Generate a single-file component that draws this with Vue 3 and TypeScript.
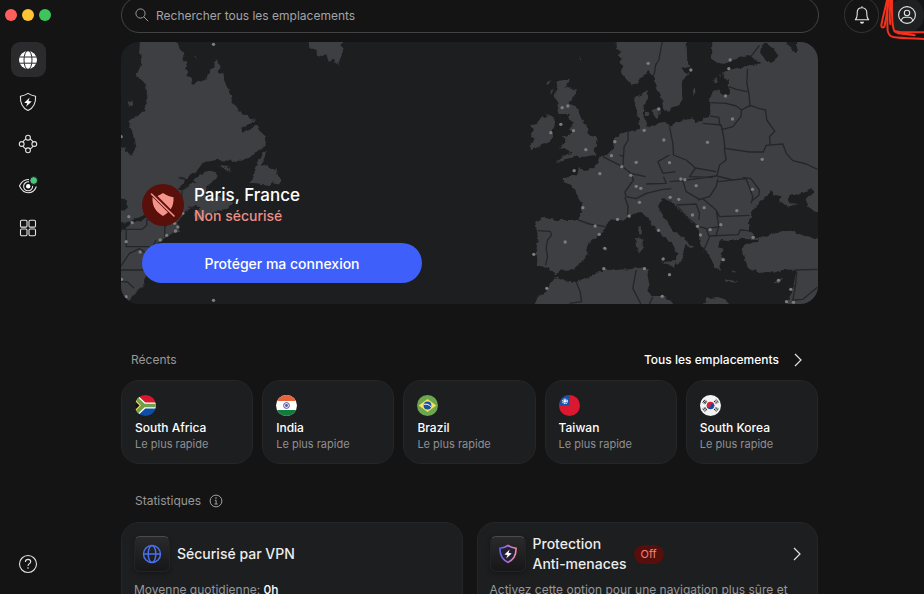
<script setup lang="ts">
interface Place {
  name: string
  flag: 'za' | 'in' | 'br' | 'tw' | 'kr'
}

const places: Place[] = [
  { name: 'South Africa', flag: 'za' },
  { name: 'India', flag: 'in' },
  { name: 'Brazil', flag: 'br' },
  { name: 'Taiwan', flag: 'tw' },
  { name: 'South Korea', flag: 'kr' },
]

type Point = [number, number]

const americaServers: Point[] = [
  [282, 13], [38, 548], [20, 605], [190, 520], [165, 550], [175, 561], [168, 573],
  [142, 586], [122, 600], [28, 530], [62, 636], [6, 718], [20, 770], [282, 781], [5, 290],
]

const europeServers: Point[] = [
  [386, 70], [418, 207], [374, 271], [433, 300], [286, 305], [276, 347], [307, 380], [334, 406],
  [350, 367], [241, 401], [164, 392], [128, 203], [145, 198], [124, 253], [162, 272], [94, 278],
  [199, 329], [514, 90], [632, 60], [628, 86], [618, 168], [639, 237], [564, 307], [728, 358],
  [450, 368], [484, 417], [496, 419], [530, 437], [699, 448], [452, 472], [478, 478], [554, 503],
  [652, 512], [519, 525], [604, 554], [534, 559], [572, 569], [543, 585], [701, 592], [611, 659],
  [450, 704], [777, 721], [814, 748], [801, 785], [822, 787], [190, 503], [227, 558], [239, 583],
  [294, 538], [329, 528], [350, 439], [364, 445], [360, 487], [417, 571], [137, 606], [43, 643],
  [82, 745], [253, 686], [375, 686], [428, 769], [431, 657], [256, 625],
]
</script>

<template>
  <div class="app">
    <aside class="sidebar">
      <div class="lights">
        <button class="light red" aria-label="Fermer"></button>
        <button class="light yellow" aria-label="Réduire"></button>
        <button class="light green" aria-label="Agrandir"></button>
      </div>
      <nav class="nav">
        <button class="nav-item active" aria-label="VPN">
          <svg viewBox="0 0 20 20" width="20" height="20">
            <circle cx="10" cy="10" r="9" fill="#fff" />
            <g fill="none" stroke="#2b2b2e" stroke-width="1">
              <ellipse cx="10" cy="10" rx="4" ry="9.4" />
              <path d="M1 7h18M1 13.2h18" />
            </g>
          </svg>
        </button>
        <button class="nav-item" aria-label="Protection Anti-menaces">
          <svg viewBox="0 0 20 20" width="20" height="20">
            <path class="line" d="M10 1.4c2.3 1.6 4.6 2.4 7.6 2.8.3 6.200-1.600 11.500-7.600 14.300C4 15.700 2.100 10.400 2.400 4.200 5.400 3.800 7.700 3 10 1.400z" />
            <path d="M11.700 5.400 6.300 10.700l3 .6-1.300 3.400 5.700-5.200-3.200-.6z" fill="#fff" />
          </svg>
        </button>
        <button class="nav-item" aria-label="Réseau Mesh">
          <svg viewBox="0 0 20 20" width="20" height="20">
            <g class="line">
              <circle cx="10" cy="3.700" r="2.400" />
              <circle cx="10" cy="16.300" r="2.400" />
              <circle cx="3.700" cy="10" r="2.400" />
              <circle cx="16.300" cy="10" r="2.400" />
              <path d="M7.900 4.900Q5.900 6 4.900 7.900M12.100 4.900Q14.100 6 15.100 7.900M4.900 12.100Q5.900 14 7.900 15.100M15.100 12.100Q14.100 14 12.100 15.100" />
            </g>
          </svg>
        </button>
        <button class="nav-item" aria-label="Surveillance du dark web">
          <svg viewBox="0 0 20 20" width="20" height="20">
            <g class="line">
              <path d="M11 3.600C6.600 3.200 3.500 5.700 1.500 10c1.900 4 5 6.700 8.700 6.700 3.600 0 6.700-2.300 8.200-6.200" />
              <path d="M11 5.900a4.500 4.500 0 1 0 3.600 4" />
            </g>
            <circle cx="10.200" cy="10.300" r="2.200" fill="#fff" />
            <circle cx="15.700" cy="4.500" r="3.900" fill="#4bc480" stroke="#141415" stroke-width="1" />
          </svg>
        </button>
        <button class="nav-item" aria-label="Tous les produits">
          <svg viewBox="0 0 20 20" width="20" height="20">
            <g class="line">
              <rect x="2.500" y="2.300" width="6.500" height="6.800" rx="1.200" />
              <rect x="11" y="2.300" width="6.500" height="6.800" rx="1.200" />
              <rect x="2.500" y="11" width="6.500" height="6.800" rx="1.200" />
              <rect x="11" y="11" width="6.500" height="6.800" rx="1.200" />
            </g>
          </svg>
        </button>
      </nav>
      <button class="nav-item help" aria-label="Aide">
        <svg viewBox="0 0 20 20" width="20" height="20">
          <g class="line">
            <circle cx="10" cy="10" r="8.500" />
            <path d="M7.400 8c0-1.600 1.100-2.600 2.700-2.600 1.500 0 2.600.9 2.600 2.300 0 1.900-2.700 2-2.700 4.200" />
          </g>
          <circle cx="10" cy="14" r=".8" fill="#ddd" />
        </svg>
      </button>
    </aside>

    <div class="page">
      <header class="topbar">
        <label class="search">
          <svg viewBox="0 0 14 14" width="14" height="14">
            <circle cx="5.500" cy="5.500" r="4.600" />
            <path d="M8.900 8.900 13.200 13.200" />
          </svg>
          <input type="search" placeholder="Rechercher tous les emplacements" aria-label="Rechercher tous les emplacements" />
        </label>
        <div class="actions">
          <button class="round" aria-label="Notifications">
            <svg viewBox="0 0 20 20" width="20" height="20">
              <path class="line" d="M3.300 14.800h13.400c-1.300-1.500-1.900-2.500-1.900-5.300V7.600c0-2.800-2-4.800-4.800-4.800S5.200 4.800 5.200 7.600v1.900c0 2.800-.6 3.800-1.900 5.300zM10 2.800V1.300" />
              <path d="M8 16.700h4a2 2 0 0 1-4 0z" fill="#e6e6e6" />
            </svg>
          </button>
          <button class="round account" aria-label="Compte">
            <svg viewBox="0 0 20 20" width="20" height="20">
              <g class="line">
                <circle cx="10" cy="10" r="8.400" />
                <circle cx="10" cy="8" r="2.700" />
                <path d="M4.400 16c.3-2.700 2-3.700 3.900-3.700h3.400c1.900 0 3.600 1 3.900 3.700" />
              </g>
            </svg>
          </button>
          <svg class="scribble" viewBox="0 0 132 120" width="44" height="40" aria-hidden="true">
            <path d="M22 -4C16 25 5 65 4 77Q6 86 13 80C18 62 22 25 28 -4" />
            <path d="M23 -4C22 30 21 65 23 92Q26 108 39 111C65 115 95 115 136 117" />
            <path d="M36 -4C36 30 34 65 41 87C43 100 52 98 70 97L136 97" />
            <path d="M30 -4C33 20 26 45 31 72M45 93Q70 99 104 106L54 100" />
          </svg>
        </div>
      </header>

      <main class="content">
        <section class="hero">
          <svg class="map" viewBox="0 0 2094 786" preserveAspectRatio="xMidYMid slice" aria-hidden="true">
            <defs>
              <filter id="coast" x="0" y="0" width="100%" height="100%" color-interpolation-filters="sRGB">
                <feTurbulence type="fractalNoise" baseFrequency="0.060" numOctaves="2" seed="4" />
                <feDisplacementMap in="SourceGraphic" scale="14" xChannelSelector="R" yChannelSelector="G" />
              </filter>
            </defs>
            <g filter="url(#coast)">
              <rect class="sea" x="-20" y="-20" width="2140" height="830" />
              <g transform="translate(-3 -6)">
                <path class="land" d="M65 -10H163L178 24 195 42 192 60 204 66 196 82 208 98 200 108 216 112 220 136 234 122 244 128 262 115 270 92 280 88 290 58 300 75 298 95 314 102 310 120 326 140 328 160 338 168 336 188 350 198 365 222 385 226 390 236 410 240 388 252 366 264 368 278 388 270 412 256 418 270 440 290 438 318 418 330 400 345 370 362 330 362 290 360 250 368 238 385 212 404 178 445 192 450 230 414 262 394 290 400 291 412 262 442 258 462 272 478 300 470 342 488 325 506 296 510 268 526 235 544 222 528 242 504 226 498 200 512 190 522 172 545 180 575 160 580 140 590 120 605 106 620 86 640 98 655 82 670 80 700 70 740 40 765 20 800H-10V330L18 322 20 336 38 344 48 322 38 272 30 240 55 228 76 208 84 180 80 140 64 118 48 112 58 90 66 70 62 40z" />
                <path class="land" d="M392 428 428 338 440 330 436 350 424 378 444 372 452 386 472 388 470 402 486 418 476 434 462 424 454 436 410 430z" />
                <path class="land" d="M298 374 322 378 336 392 318 390zM558 -10H672L668 40 655 72 640 58 628 62 618 42 600 50 588 30 570 24z" />
                <path class="land" d="M25 190l12 -8 4 10 -10 6zM224 52l8 0 0 8z" />
                <path class="sea" d="M-10 470 18 480 28 500 14 512 -10 508zM0 552 40 540 50 534 78 526 80 536 52 544 34 550 28 560 0 578zM178 412l50 14-6 6-40-14z" />
              </g>
              <g transform="translate(1197 -6)">
                <path class="land" d="M118 122 150 116 148 126 136 144 172 148 168 162 152 184 146 194 168 200 178 212 184 235 200 252 208 285 234 294 232 316 220 330 228 344 200 350 170 350 140 358 112 370 130 345 160 338 140 328 118 324 140 308 130 290 155 278 150 262 165 250 148 238 152 222 118 222 112 200 116 182 104 174 110 145z" />
                <path class="land" d="M64 230 74 234 88 222 104 230 106 255 100 270 100 298 92 305 60 318 40 330 28 320 46 296 34 290 42 272 32 256 55 252zM82 126l14-6-8 18zM90 150l12 2-8 10zM180 50l5 8-4 4z" />
                <path class="land" d="M290 -10 292 26 306 36 295 46 308 58 296 66 312 78 304 96 318 115 335 134 352 128 372 110 386 90 394 100 402 105 412 140 428 180 432 215 450 218 454 205 480 195 490 165 486 128 494 116 508 100 485 86 512 80 502 50 502 -10z" />
                <path class="land" d="M376 214 390 218 388 230 376 226zM400 210 418 202 421 222 412 238 402 224zM520 150l6-6 2 16-6 8zM584 120l12-3-2 12-8 1zM594 104l10 0-2 8z" />
                <path class="land" d="M362 266 358 235 346 205 348 172 366 166 385 148 386 172 374 195 370 222 380 238 378 258 395 262 412 250 440 245 450 260 470 245 520 235 532 248 548 246 552 232 572 228 572 170 585 150 600 152 610 165 628 164 628 125 615 112 610 95 650 85 695 76 725 70 718 62 704 62 698 46 660 54 630 62 610 72 590 66 578 58V-10H910V810H788L802 792 822 740 830 690 794 688 770 696 740 692 720 700 704 690 684 682 676 655 668 640 672 616 688 608 716 606 718 596 690 598 660 596 630 604 600 600 596 620 612 630 606 642 618 660 602 664 604 692 586 684 580 672 568 645 556 630 540 606 538 570 520 545 490 520 470 498 456 484 436 474 420 490 416 500 430 525 448 554 460 570 500 602 522 622 512 624 500 612 490 628 496 645 476 675 464 668 476 644 456 608 440 596 418 576 400 555 384 532 368 516 350 518 330 530 310 542 290 538 262 545 260 562 240 584 215 604 202 620 204 640 190 660 174 680 158 688 120 692 106 706 86 680 52 678 54 650 48 640 56 600 48 548 68 532 110 540 175 540 184 515 189 490 170 460 165 442 134 430 126 412 172 406 178 385 205 392 232 372 240 350 262 345 284 322 280 302 300 282 325 275z" />
                <path class="land" d="M36 810 50 775 80 755 98 728 106 710 126 720 170 726 215 706 255 690 330 688 375 682 390 690 384 710 392 735 380 750 400 768 430 768 450 778 475 810zM545 810 562 775 595 771 620 780 650 810z" />
                <path class="land" d="M356 558 367 554 367 582 360 584zM350 598 368 594 371 630 355 640zM425 664 466 660 464 684zM248 624 258 620 260 629zM614 718 655 724 650 728 616 724zM762 728 788 716 776 734zM640 690l10 6-8 2z" />
                <path class="sea" d="M724 480 748 462 754 450 762 464 786 468 782 484 804 500 838 492 810 490 808 468 850 460 880 444 884 452 856 482 866 500 910 530V598L850 586 815 572 770 576 730 592 704 590 686 572 690 545 700 510z" />
                <path class="sea" d="M724 20 738 10 762 26 774 44 762 66 740 62 722 42zM800 -10H834L832 34 824 40 814 20 802 14z" />
              </g>
            </g>
            <g transform="translate(-3 -6)">
              <path class="border" d="M3 568H68L82 556V540L120 530 140 560M20 568V620H100L110 600M136 540V590M3 690H84M3 680 30 640 60 626 86 644M3 724 24 726 44 745M186 490 188 450 210 436M206 500 240 510" />
              <circle v-for="(p, i) in americaServers" :key="i" class="server" :cx="p[0]" :cy="p[1]" r="5" />
            </g>
            <g transform="translate(1197 -6)">
              <path class="border" d="M428 6 418 60 408 76 404 105M694 50 720 16M684 86 682 130 688 160 692 200M628 140 650 148 684 155M574 188 620 190 650 198 666 210 692 196 720 206 738 210 742 240 766 274 750 290 752 314M666 210 664 230 640 260 610 268 600 250M550 250 605 255 614 300 616 325 690 336 732 336 740 316 790 312 800 340 820 362 860 372 894 388M572 228 598 232 600 250M614 325 620 360 600 375 592 408 640 420 674 416M450 260 460 310 462 345 500 360 528 384 590 395M528 384 510 410 580 412M415 365 450 345M415 365 430 400 468 395M325 275 326 300 314 320 312 350 310 380 334 400 342 420 316 456M250 350 290 370 312 382M312 350 300 345M334 400 378 410M316 456 320 470 350 476 380 460 430 448 455 446M380 432 440 430 432 410M316 472 326 500 324 524 334 530M176 540 210 552 258 560M55 572 92 574 96 586 84 600 80 625 84 650 78 676M450 425 490 422 500 455 540 478 570 470 590 440 595 416M490 422 590 408M595 425 680 416 700 470 695 490M670 412 694 416 720 450 718 466 698 482M470 495 530 492 540 520 538 540M535 480 550 476 590 510 600 530 690 526M590 510 598 560 588 590M538 560 560 565 568 588 656 584 662 570 688 572M548 640 562 610 570 590M475 500 500 530 538 560M564 565 600 560M170 726 182 755 186 785 150 790M350 690 340 745 364 792M400 770 390 792M828 690 894 688M832 694 828 736 820 780 850 778 894 742" />
              <circle v-for="(p, i) in europeServers" :key="i" class="server" :cx="p[0]" :cy="p[1]" r="5" />
            </g>
          </svg>
          <div class="status">
            <span class="badge">
              <svg viewBox="0 0 42 42" width="42" height="42">
                <path d="M21 9c4 3 7.500 3.500 10.500 4.300.5 8.700-3 14.700-10.500 18.700-7.500-4-11-10-10.500-18.700C13.500 12.500 17 12 21 9z" fill="#f4948a" />
                <path d="M9 8.500 33.500 33" stroke="#590f0a" stroke-width="4" />
                <path d="M9.500 10 32 32" stroke="#f4948a" stroke-width="1.600" stroke-linecap="round" />
              </svg>
            </span>
            <div>
              <h1>Paris, France</h1>
              <p>Non sécurisé</p>
            </div>
          </div>
          <button class="connect">Protéger ma connexion</button>
        </section>

        <section>
          <div class="section-head">
            <h2>Récents</h2>
            <a href="#">
              Tous les emplacements
              <svg class="chevron" viewBox="0 0 8 14" width="8" height="14"><path d="M1 1l6 6-6 6" /></svg>
            </a>
          </div>
          <div class="places">
            <button v-for="place in places" :key="place.name" class="card place">
              <svg class="flag" viewBox="0 0 21 21" width="21" height="21" aria-hidden="true">
                <template v-if="place.flag === 'za'">
                  <path d="M0 0h21v10.500H0z" fill="#d8182f" />
                  <path d="M0 10.500h21V21H0z" fill="#0e4ca8" />
                  <path d="M-2 0 9 10.500H21M-2 21 9 10.500" fill="none" stroke="#fff" stroke-width="6" />
                  <path d="M0 4v13l7-6.500z" fill="#111" />
                  <path d="M0 5 5.500 10.500 0 16" fill="none" stroke="#f5cf4b" stroke-width="1.500" />
                  <path d="M-2 0 9 10.500H21M-2 21 9 10.500" fill="none" stroke="#6fa148" stroke-width="3.400" />
                </template>
                <template v-else-if="place.flag === 'in'">
                  <path d="M0 0h21v21H0z" fill="#fff" />
                  <path d="M0 0h21v6H0z" fill="#e8633a" />
                  <path d="M0 15h21v6H0z" fill="#137b3c" />
                  <circle cx="10.500" cy="10.500" r="2.900" fill="#eef" stroke="#55539b" stroke-width="1" />
                  <circle cx="10.500" cy="10.500" r="1.400" fill="#55539b" />
                </template>
                <template v-else-if="place.flag === 'br'">
                  <path d="M0 0h21v21H0z" fill="#6ea650" />
                  <path d="M1.800 10.500 10.500 4l8.700 6.500-8.700 6.500z" fill="#f8e060" />
                  <circle cx="10.500" cy="10.500" r="3.900" fill="#1552a4" />
                  <path d="M6.800 9.300c3-.5 5.500.3 7.400 2.600" fill="none" stroke="#fff" stroke-width="1" />
                </template>
                <template v-else-if="place.flag === 'tw'">
                  <path d="M0 0h21v21H0z" fill="#da1930" />
                  <path d="M0 0h10.500v10.500H0z" fill="#1552a8" />
                  <circle cx="6" cy="6.300" r="2.200" fill="none" stroke="#fff" stroke-width="1.400" stroke-dasharray="1 .6" />
                  <circle cx="6" cy="6.300" r="1.200" fill="#fff" />
                </template>
                <template v-else>
                  <path d="M0 0h21v21H0z" fill="#f3f3f3" />
                  <path d="M6.700 10.500a3.800 3.800 0 0 1 7.600 0z" fill="#d3203a" />
                  <path d="M6.700 10.500a3.800 3.800 0 0 0 7.600 0z" fill="#174a9c" />
                  <circle cx="8.600" cy="10.700" r="1.900" fill="#d3203a" />
                  <circle cx="12.400" cy="10.300" r="1.900" fill="#174a9c" />
                  <g stroke="#222" stroke-width="1">
                    <path d="M3 7.500 5.200 4.600M4.100 8.200 6.300 5.300M5.100 9 7.200 6.100" transform="translate(-.4 .2)" />
                    <path d="M18.400 7.700 16.200 4.800M17.300 8.500 15.100 5.600M16.200 9.200 14 6.300" stroke-dasharray="1.500 .5" transform="translate(0 -.4)" />
                    <path d="M3 13.400 5.200 16.300M4.100 12.600 6.300 15.500M5.100 11.900 7.200 14.800" stroke-dasharray="2 .4" transform="translate(-.3 .3)" />
                    <path d="M18.400 13.400 16.200 16.300M17.300 12.600 15.100 15.500M16.200 11.900 14 14.800" stroke-dasharray="1.500 .5" transform="translate(0 .3)" />
                  </g>
                </template>
              </svg>
              <span class="place-name">{{ place.name }}</span>
              <span class="place-sub">Le plus rapide</span>
            </button>
          </div>
        </section>

        <section>
          <div class="section-head stats-head">
            <h2>Statistiques</h2>
            <button class="info" aria-label="Informations">
              <svg viewBox="0 0 14 14" width="14" height="14">
                <g fill="none" stroke="#a0a0a2">
                  <circle cx="7" cy="7" r="5.900" />
                  <path d="M5.800 6.200H7.100V10M5.600 10h3" />
                </g>
                <circle cx="7" cy="4" r=".8" fill="#a0a0a2" />
              </svg>
            </button>
          </div>
          <div class="stats">
            <article class="card stat">
              <div class="stat-head">
                <span class="tile">
                  <svg viewBox="0 0 20 20" width="20" height="20">
                    <g fill="none" stroke="#4870ee" stroke-width="1.500">
                      <circle cx="10" cy="10" r="8.500" />
                      <ellipse cx="10" cy="10" rx="3.800" ry="8.500" />
                      <path d="M1.500 10h17" />
                    </g>
                  </svg>
                </span>
                <h3>Sécurisé par VPN</h3>
              </div>
              <p>Moyenne quotidienne: <b>0h</b></p>
            </article>
            <article class="card stat">
              <div class="stat-head">
                <span class="tile">
                  <svg viewBox="0 0 20 20" width="20" height="20">
                    <defs>
                      <linearGradient id="shield-stroke">
                        <stop offset="0" stop-color="#5867f0" />
                        <stop offset=".5" stop-color="#b572d4" />
                        <stop offset="1" stop-color="#f58b9c" />
                      </linearGradient>
                    </defs>
                    <path d="M10 1.500c2.300 1.600 4.600 2.300 8 2.700.3 6.200-2 11.300-8 14.200C4 15.500 1.700 10.400 2 4.200c3.400-.4 5.700-1.100 8-2.700z" fill="#241f35" stroke="url(#shield-stroke)" stroke-width="1.600" />
                    <path d="M11.700 5.400 6.500 10.500l3 .6-1.300 3.300 5.500-5-3.200-.6z" fill="#fff" />
                  </svg>
                </span>
                <h3>Protection<br />Anti-menaces</h3>
                <span class="off">Off</span>
                <svg class="chevron" viewBox="0 0 8 14" width="8" height="14"><path d="M1 1l6 6-6 6" /></svg>
              </div>
              <p>Activez cette option pour une navigation plus sûre et</p>
            </article>
          </div>
        </section>
      </main>
    </div>
  </div>
</template>

<style>
body {
  background: #141415;
}
</style>

<style scoped>
.app {
  display: flex;
  height: 100vh;
  overflow: hidden;
  background: #141415;
  color: #f2f2f2;
  font-family: Inter, 'Liberation Sans', sans-serif;
  font-size: 12px;
}
h1,
h2,
h3,
p {
  margin: 0;
  font-weight: 400;
}
button {
  padding: 0;
  border: 0;
  background: none;
  color: inherit;
  font: inherit;
}
a {
  color: inherit;
  text-decoration: none;
}
svg {
  display: block;
  flex: none;
}
.line {
  fill: none;
  stroke: #e2e2e2;
  stroke-width: 1.1;
  stroke-linejoin: round;
}
.sidebar {
  display: flex;
  flex-direction: column;
  align-items: center;
  flex: none;
  width: 56px;
  padding: 9px 0 13px;
  box-sizing: border-box;
}
.lights {
  display: flex;
  gap: 5px;
  padding-bottom: 21px;
}
.light {
  width: 12px;
  height: 12px;
  border-radius: 50%;
}
.red {
  background: #fe5f5c;
}
.yellow {
  background: #fdc536;
}
.green {
  background: #3dc55c;
}
.nav {
  display: flex;
  flex-direction: column;
  gap: 7px;
}
.nav-item {
  display: grid;
  place-items: center;
  width: 35px;
  height: 35px;
  border-radius: 9px;
}
.active {
  background: #2b2b2e;
}
.help {
  margin-top: auto;
}
.page {
  flex: 1;
  min-width: 0;
  padding-left: 65px;
}
.topbar {
  display: flex;
  gap: 25px;
  height: 36px;
  margin-top: -3px;
}
.search {
  display: flex;
  align-items: center;
  flex: 1;
  gap: 7px;
  padding: 0 13px;
  border: 1px solid #434345;
  border-radius: 18px;
}
.search svg {
  fill: none;
  stroke: #9c9c9e;
}
.search input {
  flex: 1;
  min-width: 0;
  padding: 0;
  border: 0;
  outline: 0;
  background: none;
  color: #f2f2f2;
  font: inherit;
}
.search input::placeholder {
  color: #a3a3a5;
  opacity: 1;
}
.actions {
  position: relative;
  display: flex;
  gap: 10px;
}
.round {
  display: grid;
  place-items: center;
  width: 35px;
  height: 36px;
  border: 1px solid #353537;
  border-radius: 18px;
}
.account {
  border-color: #1f2022;
  background: #1f2022;
}
.scribble {
  position: absolute;
  top: 3px;
  right: 0;
  fill: none;
  stroke: #f5311c;
  stroke-width: 6;
  stroke-linecap: round;
  stroke-linejoin: round;
  pointer-events: none;
}
.content {
  padding: 9px 106px 0 0;
}
.hero {
  position: relative;
  display: flex;
  flex-direction: column;
  justify-content: flex-end;
  gap: 17px;
  height: 262px;
  padding: 0 21px 21px;
  box-sizing: border-box;
  border-radius: 18px;
  overflow: hidden;
  background: #1d1e20;
}
.map {
  position: absolute;
  inset: 0;
  width: 100%;
  height: 100%;
}
.land {
  fill: #3e3f42;
}
.sea {
  fill: #1d1e20;
}
.border {
  fill: none;
  stroke: #252628;
  stroke-width: 4;
  stroke-linejoin: round;
}
.server {
  fill: #7c7d80;
}
.status {
  position: relative;
  display: flex;
  align-items: center;
  gap: 10px;
}
.badge {
  border-radius: 50%;
  background: #590f0a;
}
h1 {
  font-size: 17px;
  font-weight: 500;
  line-height: 22px;
  color: #fff;
}
.status p {
  font-size: 14px;
  font-weight: 500;
  line-height: 20px;
  color: #ec8f86;
}
.connect {
  position: relative;
  width: 280px;
  height: 40px;
  border-radius: 20px;
  background: #3e5ffa;
  color: #fff;
  font-size: 14px;
  font-weight: 500;
}
.section-head {
  display: flex;
  align-items: center;
  justify-content: space-between;
  padding: 46px 16px 10px 10px;
  line-height: 20px;
}
h2 {
  font-size: 12px;
  color: #98989a;
}
.section-head a {
  display: flex;
  align-items: center;
  gap: 15px;
  color: #fff;
  font-weight: 500;
}
.chevron {
  fill: none;
  stroke: #e2e2e2;
  stroke-width: 1.2;
}
.places {
  display: grid;
  grid-template-columns: repeat(5, 1fr);
  gap: 9px;
}
.card {
  box-sizing: border-box;
  border: 1px solid #252628;
  border-radius: 18px;
  background: #1d1e20;
}
.place {
  display: flex;
  flex-direction: column;
  align-items: flex-start;
  height: 84px;
  padding: 14px 13px;
}
.flag {
  border-radius: 50%;
}
.place-name {
  padding-top: 4px;
  line-height: 16px;
  font-weight: 500;
  color: #fff;
}
.place-sub {
  font-size: 11px;
  line-height: 16px;
  color: #8f8f92;
}
.stats-head {
  justify-content: flex-start;
  gap: 8px;
  padding: 27px 14px 11px;
}
.stats {
  display: grid;
  grid-template-columns: 1fr 1fr;
  gap: 14px;
}
.stat {
  min-height: 150px;
  padding: 11px 12px;
}
.stat-head {
  display: flex;
  align-items: center;
  gap: 7px;
  height: 40px;
}
.tile {
  display: grid;
  place-items: center;
  width: 36px;
  height: 36px;
  box-sizing: border-box;
  border: 1px solid #222325;
  border-top-color: #4a4b4d;
  border-radius: 6px;
  background: linear-gradient(#2a2a2c, #171718);
  box-shadow: 0 2px 4px #1118;
}
h3 {
  font-size: 14px;
  font-weight: 500;
  line-height: 20px;
  color: #ececec;
}
.off {
  padding: 0 7px;
  border-radius: 10px;
  background: #560f0b;
  color: #f0857b;
  font-size: 11px;
  line-height: 19px;
}
.stat .chevron {
  margin-left: auto;
  margin-right: 4px;
}
.stat p {
  padding-top: 6px;
  line-height: 20px;
  color: #98989a;
}
.stat b {
  font-weight: 500;
  color: #fff;
}
</style>
